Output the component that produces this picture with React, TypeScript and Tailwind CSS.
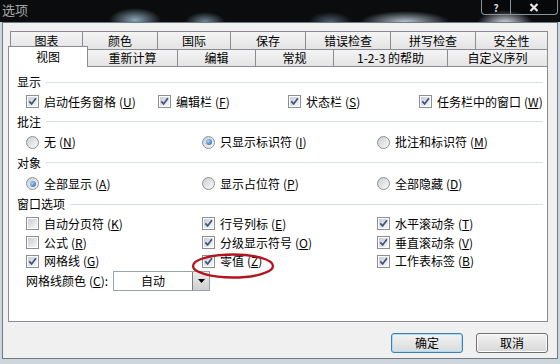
import React from "react";

const TOP_TABS = [
  { label: "图表", w: "w-[72px]" },
  { label: "颜色", w: "w-[75px]" },
  { label: "国际", w: "w-[73px]" },
  { label: "保存", w: "w-[75px]" },
  { label: "错误检查", w: "w-[85px]" },
  { label: "拼写检查", w: "w-[85px]" },
  { label: "安全性", w: "w-[73px]" },
];

const SUB_TABS = [
  { label: "重新计算", w: "w-[89px]" },
  { label: "编辑", w: "w-[78px]" },
  { label: "常规", w: "w-[78px]" },
  { label: "1-2-3 的帮助", w: "w-[114px]" },
  { label: "自定义序列", w: "w-[101px]" },
];

function Key({ k }: { k: string }) {
  return (
    <span className="ml-[3px]">
      (<span className="underline underline-offset-1">{k}</span>)
    </span>
  );
}

function Check({ on }: { on: boolean }) {
  return (
    <span className="flex h-[13px] w-[13px] shrink-0 items-center justify-center border border-[#8e8f8f] bg-white">
      <span className="relative flex h-[9px] w-[9px] items-center justify-center bg-gradient-to-br from-[#c9cdd3] to-[#f7f7f7]">
        {on && (
          <svg width="9" height="9" viewBox="0 0 9 9" className="absolute inset-0">
            <path d="M1.3 4.4 L3.6 6.9 L7.9 1.2" fill="none" stroke="#3a5488" strokeWidth="1.7" />
          </svg>
        )}
      </span>
    </span>
  );
}

function Radio({ on }: { on: boolean }) {
  return (
    <span className="flex h-[13px] w-[13px] shrink-0 items-center justify-center rounded-full border border-[#8e8f8f] bg-gradient-to-br from-[#c9cdd3] to-[#fbfbfb]">
      {on && <span className="h-[6px] w-[6px] rounded-full bg-[radial-gradient(circle_at_35%_35%,#a6d8f8,#1b5aa3)]" />}
    </span>
  );
}

function Opt({ kind, on, text, k, w }: { kind: "c" | "r"; on: boolean; text: string; k: string; w?: string }) {
  return (
    <div className={`flex items-center gap-[5px] ${w ?? ""}`}>
      {kind === "c" ? <Check on={on} /> : <Radio on={on} />}
      <span className="whitespace-nowrap">
        {text}
        <Key k={k} />
      </span>
    </div>
  );
}

function Group({ title, h }: { title: string; h: string }) {
  return (
    <div className={`flex items-center pl-[8px] ${h}`}>
      <span>{title}</span>
      <div className="ml-[5px] mr-[4px] h-px flex-1 bg-[#d8dfe4]" />
    </div>
  );
}

export default function App() {
  return (
    <div className="relative flex h-[364px] w-[560px] flex-col overflow-hidden bg-[#cfd6db] text-[12px] text-black [font-family:'Noto_Sans_CJK_SC','Liberation_Sans',sans-serif]">
      {/* glass title bar */}
      <div className="flex h-[22px] shrink-0 items-start bg-[#0a0c0e] bg-[radial-gradient(ellipse_26px_12px_at_135px_20px,rgba(160,195,215,0.85),transparent),radial-gradient(ellipse_20px_10px_at_205px_22px,rgba(170,205,225,0.65),transparent),radial-gradient(ellipse_22px_10px_at_330px_22px,rgba(150,180,200,0.5),transparent),radial-gradient(ellipse_45px_11px_at_405px_22px,rgba(215,232,242,0.85),transparent),radial-gradient(ellipse_28px_14px_at_505px_24px,rgba(240,246,252,0.95),transparent)]">
        <span className="ml-[2px] mt-[1px] text-[13px] leading-[18px] text-[#a8a8a8]">选项</span>
        <div className="ml-auto mr-[2px] flex h-[15px] w-[77px] rounded-b-[4px] border border-t-0 border-[#8b949c] bg-black/30">
          <div className="flex w-[29px] items-end justify-center border-r border-[#8b949c] pb-px text-[10px] font-bold leading-[11px] text-[#d8d8d8]">
            ?
          </div>
          <div className="flex flex-1 items-center justify-center">
            <svg width="10" height="9" viewBox="0 0 10 9">
              <path d="M1.5 1 L8.5 8 M8.5 1 L1.5 8" stroke="#e8e8e8" strokeWidth="2.2" />
            </svg>
          </div>
        </div>
      </div>

      {/* dialog body */}
      <div className="ml-[2px] flex h-[337px] w-[556px] flex-col border border-[#6f7b84] bg-[#f0f0f0] pt-[8px]">
        {/* tabs */}
        <div className="ml-[7px] flex h-[18px]">
          {TOP_TABS.map((t, i) => (
            <div
              key={t.label}
              className={`flex items-center justify-center border-l border-t border-[#898c95] bg-gradient-to-b from-[#f4f4f4] to-[#e4e4e4] ${t.w} ${i === TOP_TABS.length - 1 ? "border-r" : ""}`}
            >
              {t.label}
            </div>
          ))}
        </div>
        <div className="ml-[5px] flex h-[17px] items-end">
          <div className="relative z-10 -mb-px flex h-[21px] w-[80px] items-start justify-center border-x border-t border-[#898c95] bg-white pt-[1px]">
            视图
          </div>
          {SUB_TABS.map((t, i) => (
            <div
              key={t.label}
              className={`flex h-[17px] items-center justify-center border-t border-[#898c95] bg-gradient-to-b from-[#f4f4f4] to-[#e4e4e4] ${t.w} ${i === 0 ? "" : "border-l"} ${i === SUB_TABS.length - 1 ? "border-r" : ""}`}
            >
              {t.label}
            </div>
          ))}
        </div>

        {/* panel */}
        <div className="relative ml-[5px] h-[256px] w-[540px] border border-[#898c95] bg-white pt-[5px]">
          <Group title="显示" h="h-[20px]" />
          <div className="flex h-[19px] items-center pl-[17px]">
            <Opt kind="c" on text="启动任务窗格" k="U" w="w-[132px]" />
            <Opt kind="c" on text="编辑栏" k="F" w="w-[130px]" />
            <Opt kind="c" on text="状态栏" k="S" w="w-[131px]" />
            <Opt kind="c" on text="任务栏中的窗口" k="W" />
          </div>
          <Group title="批注" h="h-[21px]" />
          <div className="flex h-[20px] items-center pl-[17px]">
            <Opt kind="r" on={false} text="无" k="N" w="w-[176px]" />
            <Opt kind="r" on text="只显示标识符" k="I" w="w-[175px]" />
            <Opt kind="r" on={false} text="批注和标识符" k="M" />
          </div>
          <Group title="对象" h="h-[21px]" />
          <div className="flex h-[21px] items-center pl-[17px]">
            <Opt kind="r" on text="全部显示" k="A" w="w-[176px]" />
            <Opt kind="r" on={false} text="显示占位符" k="P" w="w-[175px]" />
            <Opt kind="r" on={false} text="全部隐藏" k="D" />
          </div>
          <Group title="窗口选项" h="h-[20px]" />
          <div className="flex h-[19px] items-center pl-[17px]">
            <Opt kind="c" on={false} text="自动分页符" k="K" w="w-[176px]" />
            <Opt kind="c" on text="行号列标" k="E" w="w-[175px]" />
            <Opt kind="c" on text="水平滚动条" k="T" />
          </div>
          <div className="flex h-[19px] items-center pl-[17px]">
            <Opt kind="c" on={false} text="公式" k="R" w="w-[176px]" />
            <Opt kind="c" on text="分级显示符号" k="O" w="w-[175px]" />
            <Opt kind="c" on text="垂直滚动条" k="V" />
          </div>
          <div className="flex h-[18px] items-center pl-[17px]">
            <Opt kind="c" on text="网格线" k="G" w="w-[176px]" />
            <Opt kind="c" on text="零值" k="Z" w="w-[175px]" />
            <Opt kind="c" on text="工作表标签" k="B" />
          </div>
          <div className="flex h-[21px] items-center pl-[17px]">
            <span className="w-[87px] whitespace-nowrap">
              网格线颜色
              <Key k="C" />:
            </span>
            <div className="flex h-[20px] w-[97px] border border-[#9aa3ad] bg-white">
              <span className="flex flex-1 items-center justify-center">自动</span>
              <span className="flex w-[17px] items-center justify-center border-l border-[#7a7a7a] bg-gradient-to-b from-[#ececec] to-[#cfcfcf]">
                <svg width="7" height="4" viewBox="0 0 7 4">
                  <path d="M0 0 H7 L3.5 4 Z" fill="#000" />
                </svg>
              </span>
            </div>
          </div>

          {/* red highlight circle */}
          <svg width="86" height="28" viewBox="0 0 86 28" className="absolute left-[181px] top-[185px]">
            <ellipse cx="43" cy="14" rx="40" ry="11.5" fill="none" stroke="#b3151f" strokeWidth="2.4" />
          </svg>
        </div>

        {/* buttons */}
        <div className="mt-[11px] flex justify-end gap-[13px] pr-[9px]">
          <button className="flex h-[20px] w-[72px] items-center justify-center rounded-[3px] border border-[#3c7fb1] bg-gradient-to-b from-[#f3f3f3] to-[#dadada] shadow-[inset_0_0_0_1px_#a8dcf8]">
            确定
          </button>
          <button className="flex h-[20px] w-[72px] items-center justify-center rounded-[3px] border border-[#707070] bg-gradient-to-b from-[#f3f3f3] to-[#d7d7d7] shadow-[inset_0_0_0_1px_#fcfcfc]">
            取消
          </button>
        </div>
      </div>
    </div>
  );
}
